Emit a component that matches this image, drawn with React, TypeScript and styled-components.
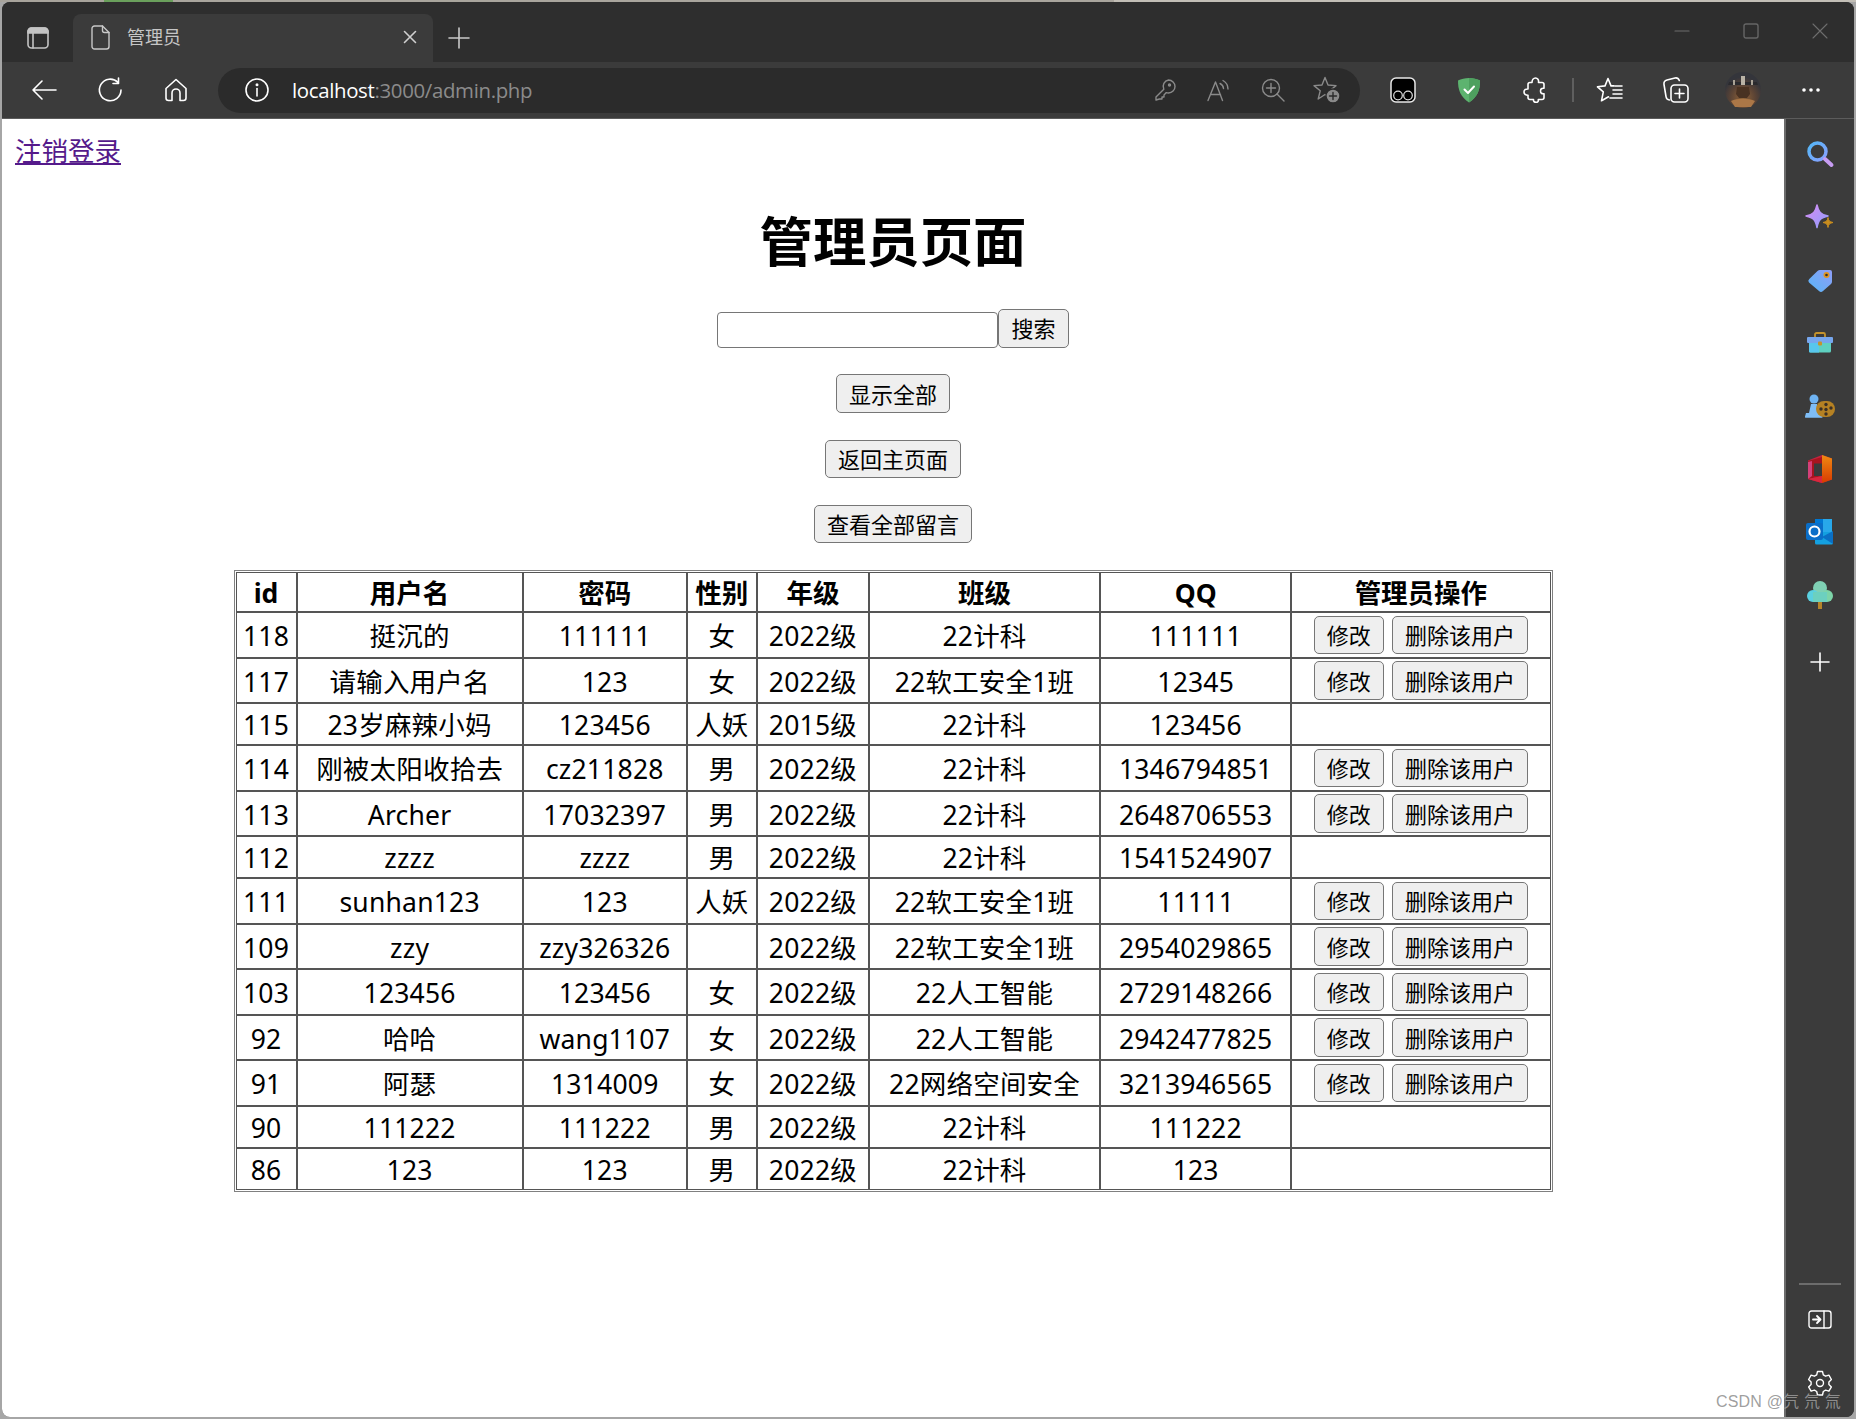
import React from "react";
import styled, { createGlobalStyle } from "styled-components";

const Global = createGlobalStyle`
  html, body { margin: 0; padding: 0; background: #fff; }
  body { font-family: "Noto Sans", "Noto Sans CJK SC", sans-serif; }
  * { box-sizing: border-box; }
`;

const Desktop = styled.div`
  position: relative;
  width: 1856px;
  height: 1419px;
  padding: 2px 2px 2px 2px;
  overflow: hidden;
  background:
    linear-gradient(90deg, #a8a49c 0 5.6%, #6aa05c 5.6% 9.3%, #a9a59d 9.3% 60%, #c2beb6 60% 100%) top / 100% 2px no-repeat,
    #a6a6a6;
`;
const Window = styled.div`
  display: flex;
  flex-direction: column;
  height: 100%;
  border-radius: 8px;
  overflow: hidden;
  background: #2e2e2e;
`;
const TitleBar = styled.div`
  display: flex;
  align-items: flex-end;
  flex: 0 0 60px;
  background: #2e2e2e;
`;
const TitleSlot = styled.div<{ $w: number }>`
  display: flex;
  align-items: center;
  justify-content: center;
  flex: 0 0 ${(p) => p.$w}px;
  height: 48px;
  padding-bottom: 1px;
`;
const Tab = styled.div`
  display: flex;
  align-items: center;
  flex: 0 0 360px;
  height: 48px;
  padding: 0 16px 2px 18px;
  border-radius: 8px 8px 0 0;
  background: #3b3b3b;
`;
const TabTitle = styled.span`
  flex: 1;
  margin-left: 17px;
  font-size: 18px;
  line-height: 24px;
  color: #c6c6c6;
`;
const WindowControls = styled.div`
  display: flex;
  margin-left: auto;
  align-self: flex-start;
  padding-top: 7px;
`;
const ControlSlot = styled.div`
  display: flex;
  align-items: center;
  justify-content: center;
  width: 69px;
  height: 44px;
`;
const ToolBar = styled.div`
  display: flex;
  align-items: center;
  flex: 0 0 57px;
  padding: 0 9px;
  background: #3b3b3b;
  border-bottom: 1px solid #5c5c5c;
`;
const ToolSlot = styled.div<{ $w?: number }>`
  display: flex;
  align-items: center;
  justify-content: center;
  flex: 0 0 ${(p) => p.$w ?? 66}px;
  height: 40px;
`;
const ToolDivider = styled.div`
  flex: 0 0 2px;
  height: 24px;
  margin: 0 3.5px;
  background: #5f5f5f;
`;
const Address = styled.div`
  display: flex;
  align-items: center;
  flex: 1;
  height: 45px;
  margin: 0 10px 0 9px;
  padding: 0 6px 0 27px;
  border-radius: 23px;
  background: #2b2b2b;
`;
const AddressText = styled.div`
  flex: 1;
  margin-left: 23px;
  font-family: "Open Sans", "Noto Sans", sans-serif;
  font-size: 20.4px;
  letter-spacing: -0.33px;
  color: #8b8b8b;
`;
const Host = styled.span`
  color: #fff;
`;
const AddressSlot = styled.div`
  display: flex;
  align-items: center;
  justify-content: center;
  flex: 0 0 54px;
`;
const Body = styled.div`
  display: flex;
  flex: 1;
  min-height: 0;
`;
const Page = styled.main`
  display: flex;
  flex-direction: column;
  align-items: center;
  flex: 1;
  background: #fff;
  color: #000;
`;
const LogoutLink = styled.a`
  align-self: flex-start;
  margin: 14px 0 0 13px;
  font-size: 26.5px;
  line-height: 36px;
  color: #551a8b;
  text-decoration: underline;
`;
const Heading = styled.h1`
  margin: 37px 0 31px;
  font-size: 53.4px;
  line-height: 72px;
  font-weight: 700;
`;
const Controls = styled.div`
  display: flex;
  flex-direction: column;
  align-items: center;
  gap: 26.8px;
`;
const SearchForm = styled.form`
  display: flex;
  align-items: flex-end;
  gap: 0;
`;
const SearchInput = styled.input`
  width: 281px;
  height: 36px;
  margin-right: 0;
  border: 1.5px solid #767676;
  border-radius: 4px;
  background: #fff;
`;
const Button = styled.button`
  height: 38.5px;
  padding: 0 12px;
  border: 1.5px solid #767676;
  border-radius: 5px;
  background: #efefef;
  font-family: "Noto Sans", "Noto Sans CJK SC", sans-serif;
  font-size: 22px;
  line-height: 1;
  color: #000;
`;
const Table = styled.table`
  width: 1319px;
  margin-top: 27px;
  table-layout: fixed;
  border-collapse: separate;
  border-spacing: 0;
  border: 1.5px solid #808080;
  padding: 1px;
`;
const Col = styled.col<{ $w: number }>`
  width: ${(p) => p.$w}px;
`;
const HeadCell = styled.th`
  height: 40px;
  padding: 1px 0 0;
  border: 1px solid #555;
  font-size: 26.5px;
  line-height: 36px;
  font-weight: 700;
  text-align: center;
`;
const Cell = styled.td<{ $tall: boolean }>`
  height: ${(p) => (p.$tall ? 45.5 : 42)}px;
  padding: 2px 0 0;
  border: 1px solid #555;
  font-size: 26.5px;
  letter-spacing: 0.2px;
  line-height: 36px;
  text-align: center;
  white-space: nowrap;
`;
const ActionCell = styled.td`
  height: 45.5px;
  padding: 0;
  border: 1px solid #555;
`;
const Actions = styled.div`
  display: flex;
  justify-content: center;
  gap: 8px;
`;
const SideBar = styled.aside`
  display: flex;
  flex-direction: column;
  align-items: center;
  flex: 0 0 70px;
  padding: 3px 0 3px;
  border-left: 2px solid #6c6c6c;
  background: #3b3b3b;
`;
const SideSlot = styled.div<{ $lift?: number }>`
  display: flex;
  align-items: center;
  justify-content: center;
  flex: 0 0 63px;
  width: 100%;
  padding-top: ${(p) => p.$lift ?? 0}px;
`;
const SideRule = styled.div`
  width: 42px;
  height: 2px;
  margin-top: auto;
  margin-bottom: 3px;
  background: #6c6c6c;
`;
const Watermark = styled.div`
  position: absolute;
  right: 15px;
  bottom: 8px;
  font-family: "Liberation Sans", "Noto Sans CJK SC", sans-serif;
  font-size: 16px;
  line-height: 18px;
  letter-spacing: 0.2px;
  color: rgba(150, 150, 150, 0.92);
  white-space: nowrap;
`;
const Glyph = styled.svg<{ $tone?: string; $w?: number }>`
  display: block;
  fill: none;
  stroke: ${(p) => p.$tone ?? "#fff"};
  stroke-width: ${(p) => p.$w ?? 1.6};
  stroke-linecap: round;
  stroke-linejoin: round;
`;
const Flat = styled.svg`
  display: block;
`;

type Row = { id: string; name: string; pw: string; sex: string; grade: string; cls: string; qq: string; ops: boolean };
const r = (id: string, name: string, pw: string, sex: string, grade: string, cls: string, qq: string, ops: boolean): Row => ({ id, name, pw, sex, grade, cls, qq, ops });
const rows: Row[] = [
  r("118", "挺沉的", "111111", "女", "2022级", "22计科", "111111", true),
  r("117", "请输入用户名", "123", "女", "2022级", "22软工安全1班", "12345", true),
  r("115", "23岁麻辣小妈", "123456", "人妖", "2015级", "22计科", "123456", false),
  r("114", "刚被太阳收拾去", "cz211828", "男", "2022级", "22计科", "1346794851", true),
  r("113", "Archer", "17032397", "男", "2022级", "22计科", "2648706553", true),
  r("112", "zzzz", "zzzz", "男", "2022级", "22计科", "1541524907", false),
  r("111", "sunhan123", "123", "人妖", "2022级", "22软工安全1班", "11111", true),
  r("109", "zzy", "zzy326326", "", "2022级", "22软工安全1班", "2954029865", true),
  r("103", "123456", "123456", "女", "2022级", "22人工智能", "2729148266", true),
  r("92", "哈哈", "wang1107", "女", "2022级", "22人工智能", "2942477825", true),
  r("91", "阿瑟", "1314009", "女", "2022级", "22网络空间安全", "3213946565", true),
  r("90", "111222", "111222", "男", "2022级", "22计科", "111222", false),
  r("86", "123", "123", "男", "2022级", "22计科", "123", false),
];
const widths = [61, 226, 164, 70, 112, 231, 191, 259];
const heads = ["id", "用户名", "密码", "性别", "年级", "班级", "QQ", "管理员操作"];

const G = ({ w, h, tone, sw, children }: { w: number; h: number; tone?: string; sw?: number; children: React.ReactNode }) => (
  <Glyph width={w} height={h} viewBox={`0 0 ${w} ${h}`} $tone={tone} $w={sw}>{children}</Glyph>
);

const dim = "#8a8a8a";

const TitleIcons = {
  Panels: () => (
    <G w={22} h={22} tone="#c4c4c4">
      <rect x="1" y="1" width="20" height="20" rx="3.5" />
      <path d="M1 4.5a3.5 3.5 0 0 1 3.5-3.5h13A3.5 3.5 0 0 1 21 4.5V6H1z" fill="#c4c4c4" />
      <path d="M6 6v15" />
    </G>
  ),
  Doc: () => (
    <G w={19} h={25} tone="#c8c8c8" sw={1.4}>
      <path d="M3.5 1h8L18 7.5V21.5a2.5 2.5 0 0 1-2.5 2.5h-12A2.5 2.5 0 0 1 1 21.5V3.5A2.5 2.5 0 0 1 3.5 1z" />
      <path d="M11.5 1v4.5a2 2 0 0 0 2 2H18" />
    </G>
  ),
  Close: () => (
    <G w={14} h={14} tone="#cfcfcf"><path d="M1.5 1.5l11 11M12.5 1.5l-11 11" /></G>
  ),
  Plus: () => (
    <G w={22} h={22} tone="#c9c9c9"><path d="M11 1v20M1 11h20" /></G>
  ),
};

const ToolIcons = {
  Back: () => (
    <G w={26} h={22}><path d="M11 2L2 11l9 9M2 11h23" /></G>
  ),
  Reload: () => (
    <G w={26} h={26}><path d="M21 5.5A10.8 10.8 0 1 0 24 13M21.5 1v5.5H16" /></G>
  ),
  Home: () => (
    <G w={24} h={24}><path d="M2 10.5L12 1.5l10 9V20a2.5 2.5 0 0 1-2.5 2.5H16V15a4 4 0 0 0-8 0v7.500H4.500A2.500 2.500 0 0 1 2 20z" /></G>
  ),
  Info: () => (
    <G w={24} h={24}><circle cx="12" cy="12" r="11" /><path d="M12 10.500V18" /><circle cx="12" cy="6.800" r=".7" fill="#fff" /></G>
  ),
  Key: () => (
    <G w={22} h={22} tone={dim} sw={1.4}>
      <path d="M14.500 1a6.500 6.500 0 0 1 0 13c-.8 0-1.500-.1-2.200-.4L10 16v2H8v2H5.500L2 21v-3l7.800-7.800A6.500 6.500 0 0 1 14.500 1z" />
      <circle cx="15.500" cy="6" r="1" fill={dim} />
    </G>
  ),
  Read: () => (
    <G w={26} h={24} tone={dim} sw={1.4}>
      <path d="M2 22.500L9.500 4l7 18.500M4.500 16.500h10" />
      <path d="M14 5.500a6 6 0 0 1 3.500 5M17 2.500a10 10 0 0 1 5 8.500" />
    </G>
  ),
  Zoom: () => (
    <G w={24} h={24} tone={dim} sw={1.4}>
      <circle cx="10" cy="10" r="8.500" />
      <path d="M10 5.500v9M5.500 10h9M16 16l7 7" />
    </G>
  ),
  StarAdd: () => (
    <G w={28} h={28} tone={dim} sw={1.4}>
      <path d="M12 1.500l3 7.500 8 .6-6.200 5.200 2 8-6.800-4.300-6.800 4.500 2-8.200L1 9.600 9 9z" />
      <circle cx="20" cy="20" r="7" fill={dim} stroke="#2b2b2b" />
      <path d="M20 16.500v7M16.500 20h7" stroke="#2b2b2b" />
    </G>
  ),
  Owl: () => (
    <Flat width="26" height="26" viewBox="0 0 26 26">
      <rect x="1" y="1" width="24" height="24" rx="5" fill="#000" stroke="#e8e8e8" strokeWidth="1.5" />
      <circle cx="8" cy="18.500" r="4.300" fill="none" stroke="#ddd" strokeWidth="1.200" />
      <circle cx="18" cy="18.500" r="4.300" fill="none" stroke="#ddd" strokeWidth="1.200" />
    </Flat>
  ),
  Shield: () => (
    <Flat width="24" height="26" viewBox="0 0 24 26">
      <path d="M12 1c4 0 8 1 11 2.500 0 9-2 16-11 22C3 19.500 1 12.500 1 3.500 4 2 8 1 12 1z" fill="#5db36f" />
      <path d="M12 1c4 0 8 1 11 2.500 0 9-2 16-11 22z" fill="#4ea05f" />
      <path d="M7.500 12.500l3.500 3.500 6-6.500" fill="none" stroke="#fff" strokeWidth="2" strokeLinecap="round" strokeLinejoin="round" />
    </Flat>
  ),
  Puzzle: () => (
    <G w={24} h={26}>
      <path d="M9 5.500c0-2.500 1.500-4.500 3.500-4.500S16 3 15.500 5.500h3.500a2 2 0 0 1 2 2v3.800c-2.300-.3-3.500.6-3.500 2.700s1.200 3 3.500 2.700v3.800a2 2 0 0 1-2 2h-3.700c.3 2-.8 2.900-2.300 2.900s-2.800-1-2.500-2.900H7a2 2 0 0 1-2-2v-2.300c-2.500 0-4-1-4-3.200s1.500-3.100 4-3V7.500a2 2 0 0 1 2-2z" />
    </G>
  ),
  Favorites: () => (
    <G w={28} h={26}>
      <path d="M12 1.500l3 7.400h3M9 8.900l3-7.400M9 8.900L1.500 9.800l5.800 5-1.800 9 7-4" />
      <path d="M17 13h9M17 17h9M14 21h12M19 9h7" />
    </G>
  ),
  Collections: () => (
    <G w={28} h={28}>
      <path d="M7.500 24A4 4 0 0 1 4 20.500L2 8.500A4 4 0 0 1 5 4l8-2c2-.4 3.500.5 4.300 2.500" />
      <rect x="9" y="9" width="17" height="17" rx="3.500" />
      <path d="M17.500 13v9M13 17.500h9" />
    </G>
  ),
  Avatar: () => (
    <Flat width="36" height="36" viewBox="0 0 36 36">
      <defs>
        <radialGradient id="av" cx="50%" cy="72%" r="58%">
          <stop offset="0" stopColor="#8f6238" />
          <stop offset=".6" stopColor="#5a4335" />
          <stop offset="1" stopColor="#34353b" />
        </radialGradient>
        <filter id="avb"><feGaussianBlur stdDeviation="0.7" /></filter>
      </defs>
      <circle cx="18" cy="18" r="18" fill="url(#av)" />
      <g filter="url(#avb)">
        <path d="M4 10h28l1 3H3z" fill="#2a2a2e" />
        <rect x="16" y="4" width="4" height="9" fill="#b9b2a6" />
        <rect x="8" y="8" width="2" height="5" fill="#a9a296" />
        <rect x="26" y="8" width="2" height="5" fill="#a9a296" />
        <path d="M12 15h12l1 7-3 4h-8l-3-4z" fill="#4a3122" />
        <path d="M6 29c6-3 18-3 24 0l-4 6H10z" fill="#ab7746" />
      </g>
    </Flat>
  ),
  More: () => (
    <Flat width="20" height="6" viewBox="0 0 20 6">
      <circle cx="3" cy="3" r="1.800" fill="#fff" />
      <circle cx="10" cy="3" r="1.800" fill="#fff" />
      <circle cx="17" cy="3" r="1.800" fill="#fff" />
    </Flat>
  ),
};

const SideIcons = {
  Search: () => (
    <Flat width="30" height="30" viewBox="0 0 30 30">
      <defs>
        <linearGradient id="sr" x1="0" y1="0" x2="1" y2="1">
          <stop offset="0" stopColor="#53b7f6" />
          <stop offset="1" stopColor="#8aa0ff" />
        </linearGradient>
      </defs>
      <circle cx="12.500" cy="12.500" r="8.500" fill="none" stroke="url(#sr)" strokeWidth="3.500" />
      <path d="M20 20l6.500 6" stroke="#c79cf2" strokeWidth="4" strokeLinecap="round" />
    </Flat>
  ),
  Sparkle: () => (
    <Flat width="30" height="30" viewBox="0 0 30 30">
      <defs>
        <linearGradient id="sp" x1="0" y1="0" x2="1" y2="1">
          <stop offset="0" stopColor="#d88cf2" />
          <stop offset="1" stopColor="#8f9cfb" />
        </linearGradient>
      </defs>
      <path d="M12 3c1.500 7 3.500 9.300 11 11-7.500 1.700-9.500 4-11 11.500C10.500 18 8.500 15.700 1 14 8.500 12.300 10.500 10 12 3z" fill="url(#sp)" stroke="url(#sp)" strokeWidth="1.500" strokeLinejoin="round" />
      <path d="M23 15.500c.5 3.200 1.500 4.300 5 5-3.500.7-4.500 1.800-5 5-.5-3.200-1.500-4.300-5-5 3.500-.7 4.500-1.800 5-5z" fill="#c98d1e" stroke="#c98d1e" strokeWidth="1" strokeLinejoin="round" />
    </Flat>
  ),
  Tag: () => (
    <Flat width="30" height="30" viewBox="0 0 30 30">
      <defs>
        <linearGradient id="tg" x1="1" y1="0" x2="0" y2="1">
          <stop offset="0" stopColor="#8f9df8" />
          <stop offset="1" stopColor="#58b6f6" />
        </linearGradient>
      </defs>
      <path d="M15 5h10a2 2 0 0 1 2 2v10a3 3 0 0 1-1 2l-8 7a3 3 0 0 1-4 0L4 17.500a2.500 2.500 0 0 1 .3-3.500L12.500 6A4 4 0 0 1 15 5z" fill="url(#tg)" />
      <circle cx="21.500" cy="10" r="3" fill="#e2951f" />
      <circle cx="21.500" cy="10" r="1.300" fill="#333" />
    </Flat>
  ),
  Toolbox: () => (
    <Flat width="30" height="30" viewBox="0 0 30 30">
      <path d="M10 10V6.500A1.500 1.500 0 0 1 11.500 5h7A1.500 1.500 0 0 1 20 6.500V10" fill="none" stroke="#c4932c" strokeWidth="1.800" />
      <rect x="2" y="9" width="26" height="6" rx="1" fill="#76a6ee" />
      <path d="M4 15h22v8a1.500 1.500 0 0 1-1.500 1.500h-19A1.500 1.500 0 0 1 4 23z" fill="#5ed0c0" />
      <path d="M4 15h10v9.500H5.500A1.500 1.500 0 0 1 4 23z" fill="#58c6ec" />
      <rect x="13" y="13.500" width="4" height="4" rx="1" fill="#c4932c" />
    </Flat>
  ),
  Chess: () => (
    <Flat width="32" height="30" viewBox="0 0 32 30">
      <circle cx="10" cy="8" r="4.500" fill="#6fb4f3" />
      <path d="M7 13h6l1.500 9h3l1 3.500a1 1 0 0 1-1 1.300H2a1 1 0 0 1-1-1.300L2 22h3z" fill="#7ebdf6" />
      <rect x="12" y="10" width="19" height="16" rx="8" fill="#b58123" />
      <circle cx="22" cy="13.500" r="1.700" fill="#3b3026" />
      <circle cx="17" cy="18" r="1.700" fill="#3b3026" />
      <circle cx="22" cy="18.500" r="1.700" fill="#3b3026" />
      <circle cx="27" cy="17" r="1.700" fill="#3b3026" />
      <circle cx="22" cy="23" r="1.700" fill="#3b3026" />
    </Flat>
  ),
  Office: () => (
    <Flat width="28" height="30" viewBox="0 0 28 30">
      <defs>
        <linearGradient id="of" x1="0" y1="0" x2="0" y2="1">
          <stop offset="0" stopColor="#f08a12" />
          <stop offset="1" stopColor="#d83b01" />
        </linearGradient>
      </defs>
      <path d="M2 6.500L16 1l10 3.500v21L16 29 2 25V6.500z" fill="#c4233e" />
      <path d="M16 1l10 3.500v21L16 29z" fill="url(#of)" />
      <path d="M2 7l14-4v19l-14 3z" fill="#a8141f" />
      <path d="M2 8l4-1v15l-4 3z" fill="#d4417a" />
      <path d="M8 9.500h8V22H8z" fill="#3b3b3b" />
      <path d="M2 25l14-3v7z" fill="#d8273e" />
    </Flat>
  ),
  Outlook: () => (
    <Flat width="30" height="30" viewBox="0 0 30 30">
      <rect x="10" y="2" width="17" height="13" fill="#28a8ea" />
      <rect x="10" y="2" width="8" height="7" fill="#0078d4" />
      <path d="M10 15h18v11a1.500 1.500 0 0 1-1.500 1.500H11.500A1.500 1.500 0 0 1 10 26z" fill="#14a0e0" />
      <path d="M28 14v13l-11-7z" fill="#0a6fc4" />
      <rect x="1" y="6" width="17" height="17" rx="2" fill="#0a6ec8" />
      <circle cx="9.500" cy="14.500" r="5" fill="none" stroke="#fff" strokeWidth="2.200" />
    </Flat>
  ),
  Tree: () => (
    <Flat width="28" height="30" viewBox="0 0 28 30">
      <rect x="12" y="21" width="4" height="8" fill="#b5842a" />
      <circle cx="14" cy="8" r="7" fill="#7fd0b4" />
      <circle cx="7" cy="16" r="6" fill="#5ad0e0" />
      <circle cx="21" cy="16" r="6" fill="#7dd4a8" />
      <rect x="7" y="12" width="14" height="10" fill="#6cd0bf" />
    </Flat>
  ),
  Add: () => (
    <G w={20} h={20}><path d="M10 1v18M1 10h18" /></G>
  ),
  Dock: () => (
    <G w={24} h={20} sw={1.4}>
      <rect x="1" y="1" width="22" height="17" rx="2.500" />
      <path d="M16 1v17" />
      <path d="M5 9.500h7M9 6l3.500 3.500L9 13" strokeWidth="1.800" />
    </G>
  ),
  Gear: () => (
    <G w={26} h={26} sw={1.4}>
      <path d="M10.500 1.500h5l.8 3.400 2.300 1.300 3.300-1 2.500 4.300-2.500 2.400v2.600l2.500 2.400-2.500 4.300-3.300-1-2.300 1.300-.8 3.500h-5l-.8-3.500-2.300-1.300-3.300 1-2.500-4.300 2.500-2.400v-2.600L1.600 9.500l2.500-4.300 3.300 1 2.300-1.300z" />
      <circle cx="13" cy="13" r="3.500" />
    </G>
  ),
};

export default function App() {
  return (
    <>
      <Global />
      <Desktop>
        <Window>
          <TitleBar>
            <TitleSlot $w={71}><TitleIcons.Panels /></TitleSlot>
            <Tab>
              <TitleIcons.Doc />
              <TabTitle>管理员</TabTitle>
              <TitleIcons.Close />
            </Tab>
            <TitleSlot $w={52}><TitleIcons.Plus /></TitleSlot>
            <WindowControls>
              <ControlSlot>
                <G w={16} h={4} tone="#6d6d6d" sw={1.2}><path d="M1 2h14" /></G>
              </ControlSlot>
              <ControlSlot>
                <G w={16} h={16} tone="#666" sw={1.4}><rect x="1" y="1" width="14" height="14" rx="2" /></G>
              </ControlSlot>
              <ControlSlot>
                <G w={16} h={16} tone="#6d6d6d" sw={1.1}><path d="M1 1l14 14M15 1L1 15" /></G>
              </ControlSlot>
            </WindowControls>
          </TitleBar>
          <ToolBar>
            <ToolSlot><ToolIcons.Back /></ToolSlot>
            <ToolSlot><ToolIcons.Reload /></ToolSlot>
            <ToolSlot><ToolIcons.Home /></ToolSlot>
            <Address>
              <ToolIcons.Info />
              <AddressText><Host>localhost</Host>:3000/admin.php</AddressText>
              <AddressSlot><ToolIcons.Key /></AddressSlot>
              <AddressSlot><ToolIcons.Read /></AddressSlot>
              <AddressSlot><ToolIcons.Zoom /></AddressSlot>
              <AddressSlot><ToolIcons.StarAdd /></AddressSlot>
            </Address>
            <ToolSlot><ToolIcons.Owl /></ToolSlot>
            <ToolSlot><ToolIcons.Shield /></ToolSlot>
            <ToolSlot><ToolIcons.Puzzle /></ToolSlot>
            <ToolDivider />
            <ToolSlot><ToolIcons.Favorites /></ToolSlot>
            <ToolSlot><ToolIcons.Collections /></ToolSlot>
            <ToolSlot $w={68}><ToolIcons.Avatar /></ToolSlot>
            <ToolSlot $w={68}><ToolIcons.More /></ToolSlot>
          </ToolBar>
          <Body>
            <Page>
              <LogoutLink href="#">注销登录</LogoutLink>
              <Heading>管理员页面</Heading>
              <Controls>
                <SearchForm>
                  <SearchInput type="text" />
                  <Button type="button">搜索</Button>
                </SearchForm>
                <Button type="button">显示全部</Button>
                <Button type="button">返回主页面</Button>
                <Button type="button">查看全部留言</Button>
              </Controls>
              <Table>
                <colgroup>
                  {widths.map((w, i) => <Col key={i} $w={w} />)}
                </colgroup>
                <thead>
                  <tr>{heads.map((h) => <HeadCell key={h}>{h}</HeadCell>)}</tr>
                </thead>
                <tbody>
                  {rows.map((row) => (
                    <tr key={row.id}>
                      {[row.id, row.name, row.pw, row.sex, row.grade, row.cls, row.qq].map((v, i) => (
                        <Cell key={i} $tall={row.ops}>{v}</Cell>
                      ))}
                      {row.ops ? (
                        <ActionCell>
                          <Actions>
                            <Button type="button">修改</Button>
                            <Button type="button">删除该用户</Button>
                          </Actions>
                        </ActionCell>
                      ) : (
                        <Cell $tall={false} />
                      )}
                    </tr>
                  ))}
                </tbody>
              </Table>
            </Page>
            <SideBar>
              <SideSlot><SideIcons.Search /></SideSlot>
              <SideSlot><SideIcons.Sparkle /></SideSlot>
              <SideSlot><SideIcons.Tag /></SideSlot>
              <SideSlot><SideIcons.Toolbox /></SideSlot>
              <SideSlot><SideIcons.Chess /></SideSlot>
              <SideSlot><SideIcons.Office /></SideSlot>
              <SideSlot><SideIcons.Outlook /></SideSlot>
              <SideSlot><SideIcons.Tree /></SideSlot>
              <SideSlot $lift={9}><SideIcons.Add /></SideSlot>
              <SideRule />
              <SideSlot><SideIcons.Dock /></SideSlot>
              <SideSlot><SideIcons.Gear /></SideSlot>
            </SideBar>
          </Body>
        </Window>
        <Watermark>CSDN @氕 氘 氚</Watermark>
      </Desktop>
    </>
  );
}
